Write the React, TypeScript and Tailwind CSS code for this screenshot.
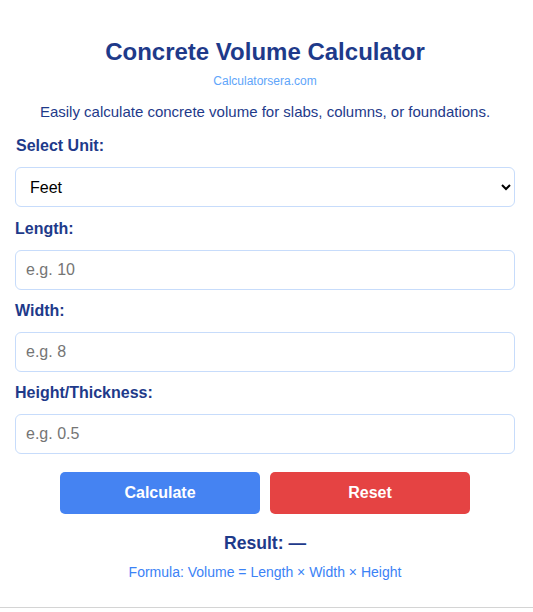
import { useState } from 'react';

const fields = [
  { id: 'length', label: 'Length:', placeholder: 'e.g. 10', gap: 'mt-[12px]' },
  { id: 'width', label: 'Width:', placeholder: 'e.g. 8', gap: 'mt-[11px]' },
  { id: 'height', label: 'Height/Thickness:', placeholder: 'e.g. 0.5', gap: 'mt-[11px]' },
];

const App = () => {
  const [unit, setUnit] = useState('feet');
  const [values, setValues] = useState<Record<string, string>>({ length: '', width: '', height: '' });
  const [result, setResult] = useState<string>('—');

  const calculate = () => {
    const l = parseFloat(values.length);
    const w = parseFloat(values.width);
    const h = parseFloat(values.height);
    if ([l, w, h].some(isNaN)) return setResult('—');
    const v = l * w * h;
    setResult(`${v.toFixed(2)} ${unit === 'feet' ? 'ft³' : 'm³'}`);
  };

  const reset = () => {
    setValues({ length: '', width: '', height: '' });
    setResult('—');
  };

  return (
    <div className="min-h-[608px] bg-white border-b border-[#d4d4d4] font-['Liberation_Sans',Arial,sans-serif]">
      <div className="w-[500px] ml-[15px] pt-[37px] flex flex-col">
        <h1 className="text-center text-[24px] leading-[30px] font-bold text-[#1e3a8a]">
          Concrete Volume Calculator
        </h1>
        <div className="text-center text-[12px] leading-[14px] mt-[7px] text-[#60a5fa]">
          Calculatorsera.com
        </div>
        <p className="text-center text-[15px] leading-[18px] mt-[15px] text-[#1e3a8a]">
          Easily calculate concrete volume for slabs, columns, or foundations.
        </p>

        <label className="text-[16px] leading-[19px] font-bold text-[#1e3a8a] mt-[15px] mb-[12px] pl-[1px]">
          Select Unit:
        </label>
        <select
          value={unit}
          onChange={e => setUnit(e.target.value)}
          className="h-[40px] w-full px-[10px] text-[16px] text-black border border-[#c7dcfb] rounded-[6px] bg-white"
        >
          <option value="feet">Feet</option>
          <option value="meters">Meters</option>
        </select>

        {fields.map(f => (
          <div key={f.id} className="flex flex-col">
            <label className={`text-[16px] leading-[19px] font-bold text-[#1e3a8a] mb-[12px] ${f.gap}`}>
              {f.label}
            </label>
            <input
              type="number"
              placeholder={f.placeholder}
              value={values[f.id]}
              onChange={e => setValues({ ...values, [f.id]: e.target.value })}
              className="h-[40px] w-full px-[10px] text-[16px] text-black border border-[#c7dcfb] rounded-[6px] placeholder:text-[#757575]"
            />
          </div>
        ))}

        <div className="flex justify-center gap-[10px] mt-[18px]">
          <button
            onClick={calculate}
            className="w-[200px] h-[42px] rounded-[5px] bg-[#4583f2] text-white text-[16px] font-bold"
          >
            Calculate
          </button>
          <button
            onClick={reset}
            className="w-[200px] h-[42px] rounded-[5px] bg-[#e54343] text-white text-[16px] font-bold"
          >
            Reset
          </button>
        </div>

        <div className="text-center text-[17.6px] leading-[21px] font-bold text-[#1e3a8a] mt-[19px]">
          Result: {result}
        </div>
        <div className="text-center text-[14px] leading-[16px] text-[#3b82f6] mt-[10px]">
          Formula: Volume = Length × Width × Height
        </div>
      </div>
    </div>
  );
};

export default App;
